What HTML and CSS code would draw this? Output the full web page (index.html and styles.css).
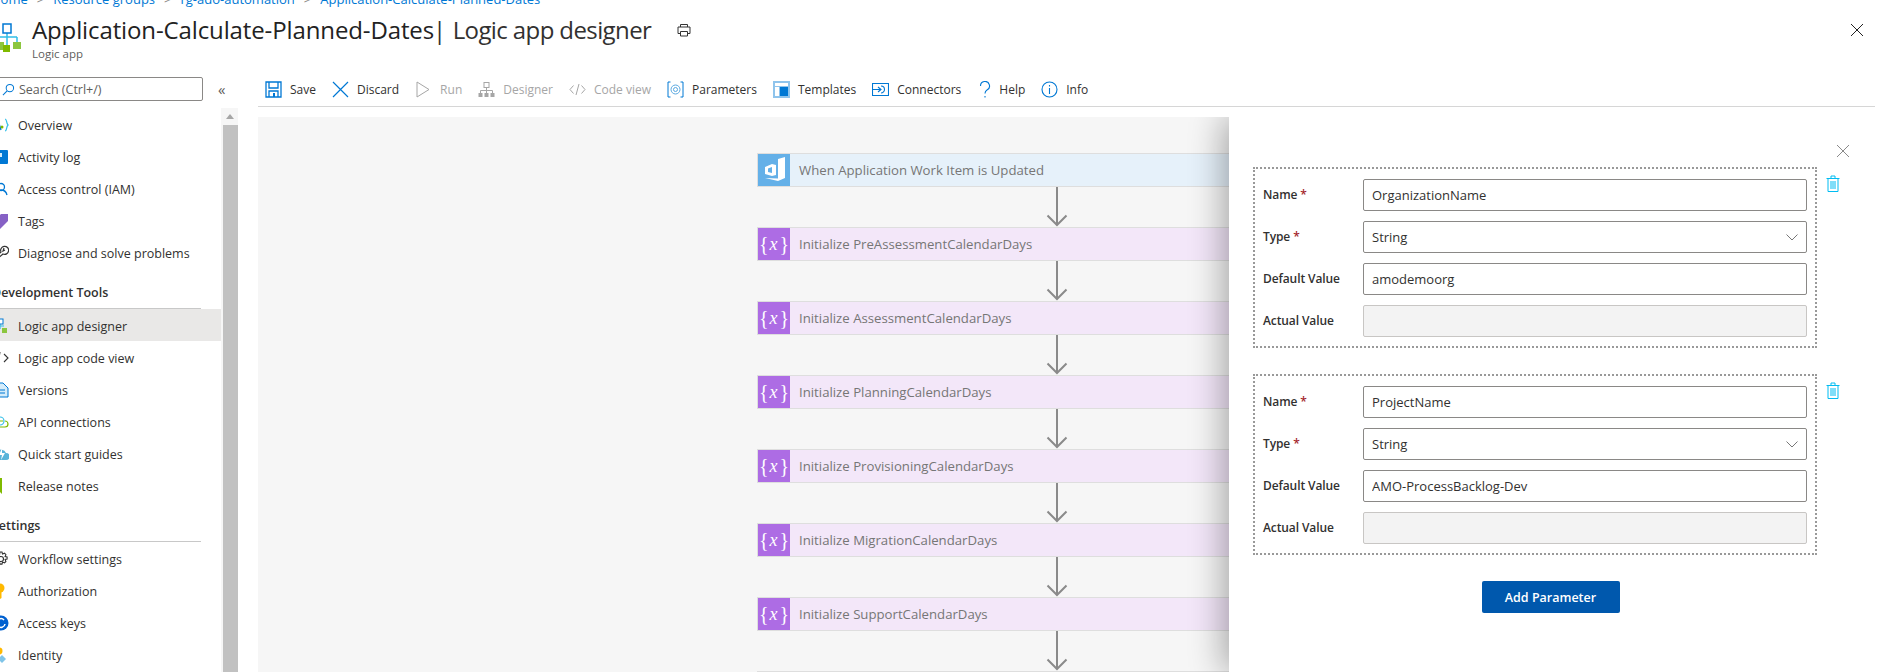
FILE: index.html
```html
<!DOCTYPE html>
<html lang="en">
<head>
  <meta charset="UTF-8">
  <title>Application-Calculate-Planned-Dates | Logic app designer</title>
  <link rel="stylesheet" href="styles.css">
</head>
<body>

  <nav class="crumbs">
    <a>Home</a><span class="sep">&gt;</span>
    <a>Resource groups</a><span class="sep">&gt;</span>
    <a>rg-ado-automation</a><span class="sep">&gt;</span>
    <a>Application-Calculate-Planned-Dates</a>
  </nav>

  <header class="head">
    <svg class="logo" viewBox="0 0 22 32">
      <path d="M7 11v12M0 15h17M17 15v6M7 15v8" fill="none" stroke="#32bfe8" stroke-width="1.5"/>
      <rect x="3" y="2" width="8" height="9" fill="#fff" stroke="#0078d4" stroke-width="1.5"/>
      <rect x="0" y="20" width="4" height="8" fill="#8cc63f"/>
      <rect x="3" y="23" width="7" height="7" fill="#7fba00"/>
      <rect x="13" y="20" width="8" height="7" fill="#8cc63f"/>
    </svg>
    <div>
      <h1 class="title"><b>Application-Calculate-Planned-Dates</b><span class="bar">|</span>Logic app designer</h1>
      <div class="subtitle">Logic app</div>
    </div>
    <svg class="print" viewBox="0 0 14 14" fill="none" stroke="#333" stroke-width="1">
      <path d="M3.5 4V1.5h7V4M3.5 10.5h-2.5v-6.500h12v6.500h-2.500M3.500 8.500h7v4.500h-7z"/>
    </svg>
    <svg class="close-blade" viewBox="0 0 14 14" fill="none" stroke="#222" stroke-width="1">
      <path d="M1 1l12 12M13 1L1 13"/>
    </svg>
  </header>

  <div class="main">
    <aside class="sidebar">
      <div class="search-row">
        <div class="search">
          <svg class="search-icon" viewBox="0 0 14 14" fill="none" stroke="#0078d4" stroke-width="1.100">
            <circle cx="8.500" cy="5.500" r="4"/><path d="M5.500 8.500L1 13"/>
          </svg>
          <span>Search (Ctrl+/)</span>
        </div>
        <span class="collapse">«</span>
      </div>

      <div class="nav-wrap">
        <ul class="nav">
          <li>
            <svg class="nav-icon" viewBox="0 0 16 16"><path d="M5 3L2 13M5 3l3 10" fill="none" stroke="#0078d4" stroke-width="1.300"/><circle cx="9" cy="10" r="1.500" fill="#7fba00"/><path d="M12 2c2 0 1 4 3 6-2 2-1 6-3 6" fill="none" stroke="#32bfe8" stroke-width="1.200"/></svg>
            Overview
          </li>
          <li>
            <svg class="nav-icon" viewBox="0 0 16 16"><rect x="1" y="1" width="14" height="14" rx="1" fill="#0078d4"/><rect x="3" y="4" width="6" height="4" fill="#d5ecfa"/></svg>
            Activity log
          </li>
          <li>
            <svg class="nav-icon" viewBox="0 0 16 16" fill="none" stroke="#0078d4" stroke-width="1.300"><circle cx="8" cy="6" r="3.500"/><path d="M2 14c1-4 3-5 6-5s5 1 6 5"/></svg>
            Access control (IAM)
          </li>
          <li>
            <svg class="nav-icon" viewBox="0 0 16 16"><path d="M8 1h7v7l-8 8-7-7z" fill="#8661c5"/></svg>
            Tags
          </li>
          <li>
            <svg class="nav-icon" viewBox="0 0 16 16" fill="none" stroke="#333" stroke-width="1.200"><path d="M1 14L8 7a4 4 0 1 1 2 2l-7 6z"/><path d="M11 3l-1 3 2-1"/></svg>
            Diagnose and solve problems
          </li>
          <li class="nav-head">Development Tools</li>
          <li class="active">
            <svg class="nav-icon" viewBox="0 0 16 16"><path d="M7 5v6M1 8h10" stroke="#32bfe8" stroke-width="1.200"/><rect x="5" y="1" width="5" height="5" fill="#fff" stroke="#0078d4"/><rect x="1" y="10" width="5" height="5" fill="#7fba00"/><rect x="9" y="10" width="5" height="5" fill="#8cc63f"/></svg>
            Logic app designer
          </li>
          <li>
            <svg class="nav-icon" viewBox="0 0 16 16" fill="none" stroke="#333" stroke-width="1.100"><path d="M4 3L1 8l3 5M7 2L5 14M11 4l4 4-4 4"/></svg>
            Logic app code view
          </li>
          <li>
            <svg class="nav-icon" viewBox="0 0 16 16"><path d="M1 1h9l5 5v9H1z" fill="#d5ecfa" stroke="#0078d4"/><path d="M3 8h9M3 11h9" stroke="#0078d4"/></svg>
            Versions
          </li>
          <li>
            <svg class="nav-icon" viewBox="0 0 16 16" fill="none"><path d="M3 13h9a3 3 0 0 0 0-6" stroke="#7fba00" stroke-width="1.200"/><circle cx="7" cy="7" r="4" stroke="#32bfe8" stroke-width="1.200"/><path d="M5 7h5" stroke="#7fba00"/></svg>
            API connections
          </li>
          <li>
            <svg class="nav-icon" viewBox="0 0 16 16"><path d="M4 14a4 4 0 0 1 0-8 5 5 0 0 1 9 1 3.500 3.500 0 0 1 0 7z" fill="#59b4d9"/><path d="M9 2L6 9h3l-1 5 4-7H9z" fill="#fff"/></svg>
            Quick start guides
          </li>
          <li>
            <svg class="nav-icon" viewBox="0 0 16 16"><path d="M0 0h9v16L4 11 0 15z" fill="#7fba00"/></svg>
            Release notes
          </li>
          <li class="nav-head">Settings</li>
          <li>
            <svg class="nav-icon" viewBox="0 0 16 16" fill="none" stroke="#333" stroke-width="1.100"><circle cx="8" cy="8" r="2.500"/><path d="M7 1h2l.5 2 2-.8 1.400 1.400-.8 2 2 .4v2l-2 .5.8 2-1.400 1.400-2-.8-.5 2H7l-.5-2-2 .8-1.400-1.400.8-2-2-.5V7l2-.5-.8-2 1.400-1.400 2 .8z"/></svg>
            Workflow settings
          </li>
          <li>
            <svg class="nav-icon" viewBox="0 0 16 16"><circle cx="7" cy="5" r="4.500" fill="#ffb900"/><path d="M5.500 8h3v7l-1.500 1-1.500-1z" fill="#ffb900"/></svg>
            Authorization
          </li>
          <li>
            <svg class="nav-icon" viewBox="0 0 16 16"><circle cx="8" cy="8" r="7.500" fill="#0060d0"/><path d="M4 7a4 4 0 0 1 7-2M12 9a4 4 0 0 1-7 2" fill="none" stroke="#fff" stroke-width="1.500"/></svg>
            Access keys
          </li>
          <li>
            <svg class="nav-icon" viewBox="0 0 16 16"><circle cx="6" cy="4" r="3.500" fill="#ffb900"/><path d="M5 6h2v4H5z" fill="#ffb900"/><path d="M9 8l4 4-4 4-4-4z" fill="#7fc4e8"/></svg>
            Identity
          </li>
        </ul>
        <div class="scroll">
          <div class="scroll-up"></div>
          <div class="scroll-thumb"></div>
        </div>
      </div>
    </aside>

    <section class="content">
      <div class="toolbar">
        <span class="tool">
          <svg viewBox="0 0 17 17" fill="none" stroke="#0078d4" stroke-width="1.300"><path d="M1 1h15v15H1z"/><path d="M4 1v6h9V1M4 16v-6h9v6"/><path d="M9 12v4" stroke-width="2"/></svg>
          Save
        </span>
        <span class="tool">
          <svg viewBox="0 0 17 17" fill="none" stroke="#0078d4" stroke-width="1.200"><path d="M1 1l15 15M16 1L1 16"/></svg>
          Discard
        </span>
        <span class="tool off">
          <svg viewBox="0 0 17 17" fill="none" stroke="#a6a6a6"><path d="M2 1l12 7.500L2 16z"/></svg>
          Run
        </span>
        <span class="tool off">
          <svg viewBox="0 0 17 17" fill="#a6a6a6"><path d="M8.500 6v3M2.500 13v-3.500h12V13M8.500 9.500V13" fill="none" stroke="#a6a6a6"/><rect x="6" y="1.500" width="5" height="5" fill="none" stroke="#a6a6a6"/><rect x="0.500" y="12" width="4" height="4"/><rect x="6.500" y="12" width="4" height="4"/><rect x="12.500" y="12" width="4" height="4"/></svg>
          Designer
        </span>
        <span class="tool off">
          <svg viewBox="0 0 17 17" fill="none" stroke="#a6a6a6"><path d="M4.500 4.500L1 8.500l3.500 4M12.500 4.500l3.500 4-3.500 4M10 3L7 14"/></svg>
          Code view
        </span>
        <span class="tool">
          <svg viewBox="0 0 17 17" fill="none" stroke="#0078d4"><path d="M3.500 1H1v15h2.500M13.500 1H16v15h-2.500"/><circle cx="8.500" cy="8.500" r="4.500" stroke="#59a8e0"/><circle cx="8.500" cy="8.500" r="2" stroke="#59a8e0"/></svg>
          Parameters
        </span>
        <span class="tool">
          <svg viewBox="0 0 17 17"><rect width="17" height="17" fill="#8fc4ec"/><rect x="2" y="2" width="13" height="3" fill="#fff"/><rect x="2" y="6" width="4" height="9" fill="#fff"/><rect x="7" y="6" width="8" height="9" fill="#0078d4"/></svg>
          Templates
        </span>
        <span class="tool">
          <svg viewBox="0 0 17 17" fill="none" stroke="#0078d4" stroke-width="1.100"><path d="M.5 2.500h16v12H.5z"/><path d="M.5 8.500h8M6 6l3 2.500L6 11"/><path d="M9 5a3.500 3.500 0 0 1 0 7"/></svg>
          Connectors
        </span>
        <span class="tool tool-help">
          <svg viewBox="0 0 12 17" fill="none" stroke="#0078d4" stroke-width="1.100"><path d="M1.500 5a4.500 4.500 0 1 1 6.500 4C6.500 10 6 10.500 6 12.500"/><path d="M6 15v1.500"/></svg>
          Help
        </span>
        <span class="tool">
          <svg viewBox="0 0 17 17" fill="none" stroke="#0078d4" stroke-width="1.100"><circle cx="8.500" cy="8.500" r="7.500"/><path d="M8.500 7v6M8.500 4v1.500"/></svg>
          Info
        </span>
      </div>

      <div class="canvas">
        <div class="flow">
          <div class="card trigger">
            <span class="card-icon">
              <svg viewBox="0 0 32 32" width="32" height="32" fill="#fff" fill-rule="evenodd"><path d="M20 5l7-2v21l-7 3-13-3 13 .5z"/><path d="M7 13l7-3 4 1v10l-4 1-7-2zM10 14.500v3.500l4 1v-6z"/></svg>
            </span>
            <span class="card-label">When Application Work Item is Updated</span>
          </div>
          <svg class="arrow" viewBox="0 0 22 40" fill="none" stroke="#8a8a8a" stroke-width="2"><path d="M11 0v38M1.500 28.500L11 38l9.500-9.500"/></svg>
          <div class="card"><span class="card-icon">{<i>x</i>}</span><span class="card-label">Initialize PreAssessmentCalendarDays</span></div>
          <svg class="arrow" viewBox="0 0 22 40" fill="none" stroke="#8a8a8a" stroke-width="2"><path d="M11 0v38M1.500 28.500L11 38l9.500-9.500"/></svg>
          <div class="card"><span class="card-icon">{<i>x</i>}</span><span class="card-label">Initialize AssessmentCalendarDays</span></div>
          <svg class="arrow" viewBox="0 0 22 40" fill="none" stroke="#8a8a8a" stroke-width="2"><path d="M11 0v38M1.500 28.500L11 38l9.500-9.500"/></svg>
          <div class="card"><span class="card-icon">{<i>x</i>}</span><span class="card-label">Initialize PlanningCalendarDays</span></div>
          <svg class="arrow" viewBox="0 0 22 40" fill="none" stroke="#8a8a8a" stroke-width="2"><path d="M11 0v38M1.500 28.500L11 38l9.500-9.500"/></svg>
          <div class="card"><span class="card-icon">{<i>x</i>}</span><span class="card-label">Initialize ProvisioningCalendarDays</span></div>
          <svg class="arrow" viewBox="0 0 22 40" fill="none" stroke="#8a8a8a" stroke-width="2"><path d="M11 0v38M1.500 28.500L11 38l9.500-9.500"/></svg>
          <div class="card"><span class="card-icon">{<i>x</i>}</span><span class="card-label">Initialize MigrationCalendarDays</span></div>
          <svg class="arrow" viewBox="0 0 22 40" fill="none" stroke="#8a8a8a" stroke-width="2"><path d="M11 0v38M1.500 28.500L11 38l9.500-9.500"/></svg>
          <div class="card"><span class="card-icon">{<i>x</i>}</span><span class="card-label">Initialize SupportCalendarDays</span></div>
          <svg class="arrow" viewBox="0 0 22 40" fill="none" stroke="#8a8a8a" stroke-width="2"><path d="M11 0v38M1.500 28.500L11 38l9.500-9.500"/></svg>
          <div class="card"><span class="card-icon"></span></div>
        </div>

        <div class="panel">
          <div class="panel-close">
            <svg viewBox="0 0 14 14" fill="none" stroke="#8a8a8a" stroke-width="1"><path d="M1 1l12 12M13 1L1 13"/></svg>
          </div>
          <div class="param-row">
            <div class="param">
              <label>Name <em>*</em></label><input class="field" value="OrganizationName">
              <label>Type <em>*</em></label>
              <div class="field select">String
                <svg viewBox="0 0 12 7" fill="none" stroke="#777"><path d="M.5 .5L6 6l5.500-5.500"/></svg>
              </div>
              <label>Default Value</label><input class="field" value="amodemoorg">
              <label>Actual Value</label><input class="field" disabled>
            </div>
            <svg class="trash" viewBox="0 0 14 17" fill="none" stroke="#00bcf2"><path d="M.5 3.500h13M2 3.500v13h10v-13M5 3.500V1h4v2.500M5 6v8M7 6v8M9 6v8"/></svg>
          </div>
          <div class="param-row">
            <div class="param">
              <label>Name <em>*</em></label><input class="field" value="ProjectName">
              <label>Type <em>*</em></label>
              <div class="field select">String
                <svg viewBox="0 0 12 7" fill="none" stroke="#777"><path d="M.5 .5L6 6l5.500-5.500"/></svg>
              </div>
              <label>Default Value</label><input class="field" value="AMO-ProcessBacklog-Dev">
              <label>Actual Value</label><input class="field" disabled>
            </div>
            <svg class="trash" viewBox="0 0 14 17" fill="none" stroke="#00bcf2"><path d="M.5 3.500h13M2 3.500v13h10v-13M5 3.500V1h4v2.500M5 6v8M7 6v8M9 6v8"/></svg>
          </div>
          <button class="add-btn">Add Parameter</button>
        </div>
      </div>
    </section>
  </div>

</body>
</html>
```

FILE: styles.css
```css
* {
  box-sizing: border-box;
}

body {
  margin: 0;
  height: 672px;
  overflow: hidden;
  background-color: #fff;
  color: #323130;
  font-family: "Open Sans", "Liberation Sans", sans-serif;
  font-size: 12.500px;
}

/* breadcrumb is cut off by the top of the screenshot */
.crumbs {
  display: flex;
  align-items: flex-end;
  gap: 9px;
  height: 7px;
  margin-left: -9px;
  overflow: hidden;
  line-height: 16px;
  font-size: 13px;
  color: #0078d4;
  white-space: nowrap;
}

.crumbs .sep {
  color: #8a8886;
}

.head {
  display: flex;
  align-items: flex-start;
  height: 59px;
  padding: 7px 18px 0 0;
}

.logo {
  width: 22px;
  height: 32px;
  margin: 8px 10px 0 0;
  flex: none;
}

.title {
  margin: 0;
  font-size: 24px;
  font-weight: 400;
  line-height: 32px;
  color: #323130;
  letter-spacing: -0.600px;
  white-space: nowrap;
}

.title b {
  font-weight: 400;
  color: #222;
  letter-spacing: -0.120px;
}

.title .bar {
  margin: 0 7px 0 -1px;
}

.subtitle {
  font-size: 11.500px;
  line-height: 16px;
  color: #605e5c;
}

.print {
  width: 14px;
  height: 14px;
  margin: 9px 0 0 26px;
}

.close-blade {
  width: 14px;
  height: 14px;
  margin: 9px 0 0 auto;
}

.main {
  display: flex;
  height: 606px;
}

.sidebar {
  width: 246px;
  margin-left: -8px;
  margin-right: 20px;
  flex: none;
  padding-top: 11px;
}

.search-row {
  display: flex;
  align-items: center;
}

.search {
  display: flex;
  align-items: center;
  gap: 4px;
  width: 211px;
  height: 24px;
  padding-left: 9px;
  border: 1px solid #8a8886;
  border-radius: 2px;
  color: #605e5c;
}

.search-icon {
  width: 13px;
  height: 13px;
}

.collapse {
  margin-left: 15px;
  font-size: 15px;
  color: #605e5c;
}

.nav-wrap {
  display: flex;
  height: 564px;
  margin-top: 7px;
}

.nav {
  width: 229px;
  margin: 0;
  padding: 0;
  list-style: none;
  flex: none;
}

.nav li {
  display: flex;
  align-items: center;
  gap: 9px;
  height: 32px;
  padding: 2px 0 0 1px;
  white-space: nowrap;
}

.nav li.nav-head {
  height: 41px;
  padding: 9px 0 0;
  font-weight: 600;
  border-bottom: 1px solid #c8c8c8;
  margin-right: 20px;
}

.nav li.active {
  background-color: #e9e8e7;
}

.nav-icon {
  width: 16px;
  height: 16px;
  flex: none;
}

.scroll {
  width: 17px;
  background-color: #f6f6f6;
}

.scroll-up {
  height: 17px;
  position: relative;
}

.scroll-up::after {
  content: "";
  position: absolute;
  left: 5px;
  top: 6px;
  border: 4px solid transparent;
  border-top: 0;
  border-bottom: 5px solid #a6a6a6;
}

.scroll-thumb {
  height: 547px;
  margin-left: 2px;
  background-color: #c1c1c1;
}

.content {
  flex: 1;
  min-width: 0;
  display: flex;
  flex-direction: column;
}

.toolbar {
  display: flex;
  align-items: center;
  gap: 16px;
  height: 41px;
  margin-right: 7px;
  padding: 6px 0 0 7px;
  border-bottom: 1px solid #d6d6d6;
  font-size: 12px;
}

.tool {
  display: flex;
  align-items: center;
  gap: 8px;
  white-space: nowrap;
}

.tool svg {
  width: 17px;
  height: 17px;
}

.tool.off {
  color: #a6a6a6;
}

.tool-help {
  margin-left: 2px;
}

.tool-help svg {
  width: 12px;
}

.canvas {
  position: relative;
  flex: 1;
  margin-top: 10px;
  padding: 36px 26px 0 0;
  overflow: hidden;
  background-color: #f6f6f6;
}

.flow {
  display: flex;
  flex-direction: column;
  align-items: center;
}

.card {
  display: flex;
  align-items: center;
  width: 600px;
  height: 34px;
  flex: none;
  background-color: #f3e7f9;
  border: 1px solid #dedede;
  color: #767676;
}

.card-icon {
  display: flex;
  align-items: center;
  justify-content: center;
  width: 32px;
  height: 32px;
  flex: none;
  background-color: #ad6ce4;
  color: #fff;
  font-family: "Liberation Serif", serif;
  font-size: 20px;
}

.card-icon i {
  padding: 0 2px 0 1px;
  font-size: 18px;
}

.card-label {
  padding-left: 9px;
  font-size: 13.200px;
}

.trigger {
  background-color: #e6f1fa;
}

.trigger .card-icon {
  background-color: #64b0e8;
}

.arrow {
  width: 22px;
  height: 40px;
  flex: none;
}

.panel {
  position: absolute;
  top: 0;
  right: 0;
  bottom: 0;
  width: 653px;
  padding: 27px 34px 0 24px;
  background-color: #fff;
  box-shadow: -6px 0 32px rgba(0, 0, 0, 0.32);
}

.panel-close {
  display: flex;
  justify-content: flex-end;
  height: 14px;
  margin: 0 -2px 9px 0;
}

.panel-close svg {
  width: 14px;
  height: 14px;
}

.param-row {
  display: flex;
  align-items: flex-start;
  margin-bottom: 26px;
}

.param {
  display: grid;
  grid-template-columns: 100px 444px;
  row-gap: 10px;
  align-items: center;
  width: 564px;
  flex: none;
  padding: 10px 8px 9px;
  border: 2px dotted #999;
}

.param label {
  font-weight: 600;
  font-size: 12px;
  letter-spacing: -0.100px;
  padding-bottom: 2px;
  color: #323130;
}

.param em {
  font-style: normal;
  color: #a4262c;
}

.field {
  display: flex;
  align-items: center;
  justify-content: space-between;
  width: 444px;
  height: 32px;
  padding: 0 8px;
  border: 1px solid #8a8886;
  border-radius: 2px;
  background-color: #fff;
  color: #323130;
  font-family: inherit;
  font-size: 13px;
}

.field:disabled {
  background-color: #f3f3f3;
  border-color: #c8c6c4;
}

.select svg {
  width: 12px;
  height: 7px;
}

.trash {
  width: 14px;
  height: 17px;
  margin: 8px 0 0 9px;
  flex: none;
}

.add-btn {
  display: block;
  width: 138px;
  height: 32px;
  margin: 0 auto;
  border: none;
  border-radius: 2px;
  background-color: #0058ad;
  color: #fff;
  font-family: inherit;
  font-size: 12.500px;
  font-weight: 600;
}
```
